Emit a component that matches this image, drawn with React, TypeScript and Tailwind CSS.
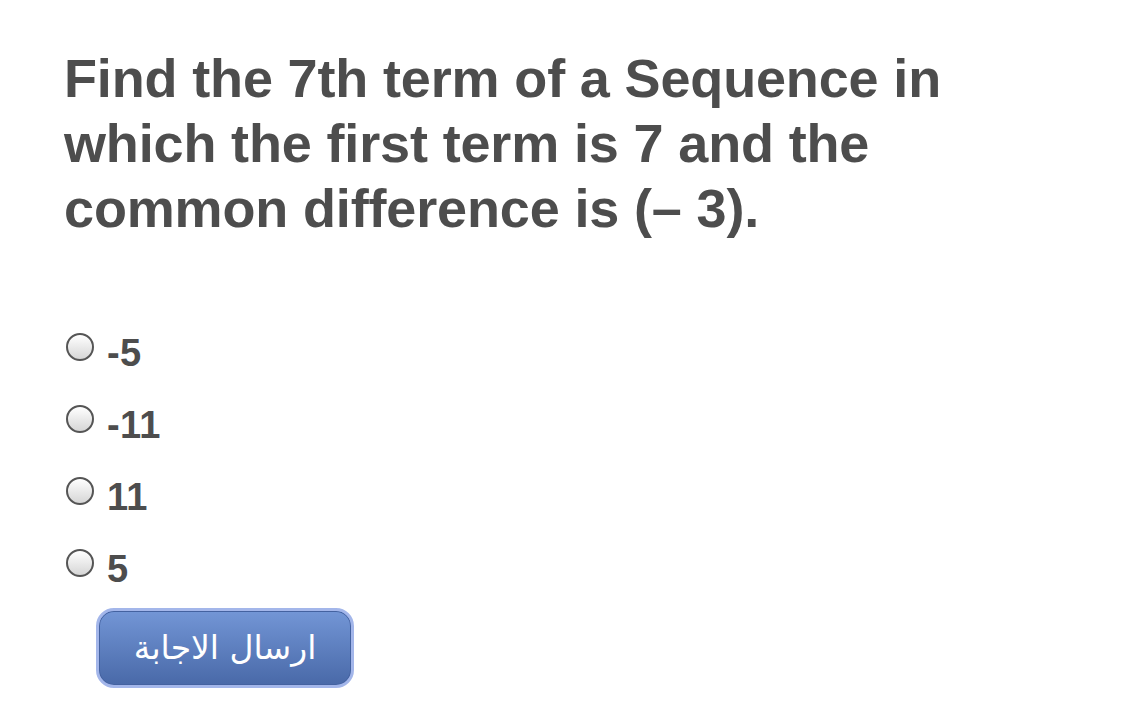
import React from 'react';

const options = ['-5', '-11', '11', '5'];

const Radio: React.FC = () => (
  <span className="mt-[2px] block h-[28px] w-[28px] shrink-0 rounded-full border-2 border-[#555] bg-gradient-to-b from-white to-[#d6d6d6]" />
);

export default function App() {
  return (
    <div className="min-h-[713px] w-full bg-white pl-16 pt-[46px] font-['Liberation_Sans',Arial,sans-serif] text-[#4d4d4d]">
      <h1 className="text-[54px] font-bold leading-[65px] tracking-[-0.15px]">
        Find the 7th term of a Sequence in
        <br />
        which the first term is 7 and the
        <br />
        common difference is (– 3).
      </h1>

      <div className="mt-[90px] flex flex-col gap-7">
        {options.map((opt) => (
          <label key={opt} className="flex h-11 items-start gap-[13px] pl-[2px]">
            <Radio />
            <span className="text-[38px] font-bold leading-[44px] tracking-[0.3px]">{opt}</span>
          </label>
        ))}
      </div>

      <button
        dir="rtl"
        className="ml-8 mt-[17px] flex h-[80px] w-[258px] items-center justify-center rounded-[18px] border-[3px] border-[#a3b6ea] bg-gradient-to-b from-[#7396d6] to-[#4969a8] font-['DejaVu_Sans',sans-serif] text-[33px] text-white shadow-[inset_0_0_0_1px_#4462a0]"
      >
        ارسال الاجابة
      </button>
    </div>
  );
}
